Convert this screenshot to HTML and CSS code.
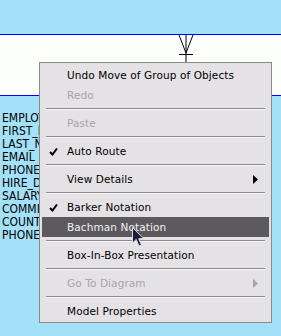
FILE: index.html
```html
<!DOCTYPE html>
<html>
<head>
<meta charset="utf-8">
<link rel="stylesheet" href="styles.css">
</head>
<body>
<div class="canvas">
  <div class="entity-top"></div>
  <div class="gap"></div>
  <div class="entity-bottom">
    <div class="cols">
      <div class="col">EMPLOYEE_ID</div>
      <div class="col">FIRST_NAME</div>
      <div class="col">LAST_NAME</div>
      <div class="col">EMAIL</div>
      <div class="col">PHONE_NUMBER</div>
      <div class="col">HIRE_DATE</div>
      <div class="col">SALARY</div>
      <div class="col">COMMISSION_PCT</div>
      <div class="col">COUNTRY_ID</div>
      <div class="col">PHONE_TYPE</div>
    </div>
  </div>

  <svg class="relation" width="20" height="30" viewBox="0 0 20 30">
    <path d="M1 0 L8 18 M15 0 L8 18 M8 0 L8 30 M1 19.5 L15 19.5" stroke="#000" stroke-width="1" fill="none"/>
  </svg>

  <div class="menu">
    <div class="item">Undo Move of Group of Objects</div>
    <div class="item disabled">Redo</div>
    <div class="sep"></div>
    <div class="item disabled">Paste</div>
    <div class="sep"></div>
    <div class="item checked">
      <svg class="check" width="9" height="8" viewBox="0 0 9 8"><path d="M1 4 L3.5 6.5 L8 0.5" stroke="#000" stroke-width="2" fill="none"/></svg>
      Auto Route</div>
    <div class="sep"></div>
    <div class="item sub">View Details
      <svg class="arrow" width="5" height="9" viewBox="0 0 5 9"><path d="M0 0 L5 4.5 L0 9 Z" fill="#000"/></svg>
    </div>
    <div class="sep"></div>
    <div class="item checked">
      <svg class="check" width="9" height="8" viewBox="0 0 9 8"><path d="M1 4 L3.5 6.5 L8 0.5" stroke="#000" stroke-width="2" fill="none"/></svg>
      Barker Notation</div>
    <div class="item active">Bachman Notation</div>
    <div class="sep"></div>
    <div class="item">Box-In-Box Presentation</div>
    <div class="sep"></div>
    <div class="item disabled sub">Go To Diagram
      <svg class="arrow" width="5" height="9" viewBox="0 0 5 9"><path d="M0 0 L5 4.5 L0 9 Z" fill="#a6a5a8"/></svg>
    </div>
    <div class="sep"></div>
    <div class="item">Model Properties</div>
  </div>

  <svg class="cursor" width="13" height="20" viewBox="0 0 13 20">
    <path d="M0.5 0.5 L0.5 16 L4.2 12.4 L7 19 L9.4 18 L6.7 11.6 L11.5 11.6 Z" fill="#1c1c3a" stroke="#d8d8e0" stroke-width="1"/>
  </svg>
</div>
</body>
</html>
```

FILE: styles.css
```css
html, body {
  margin: 0;
  padding: 0;
  background: #a3e1f9;
}
.canvas {
  position: relative;
  width: 281px;
  height: 336px;
  overflow: hidden;
  background: #a3e1f9;
}
.entity-top {
  height: 34px;
  border-bottom: 1px solid #0000ff;
  background: #a3e1f9;
}
.gap {
  height: 60px;
  background: #fdfffd;
}
.entity-bottom {
  border-top: 1px solid #0000ff;
  background: #a3e1f9;
  padding: 16px 0 0 2px;
  height: 224px;
}
.cols {
  width: 37px;
  overflow: hidden;
}
.col {
  font-family: "DejaVu Sans Condensed", "DejaVu Sans", sans-serif;
  font-size: 12px;
  line-height: 13px;
  color: #000;
  white-space: nowrap;
}
.relation {
  position: absolute;
  left: 178px;
  top: 35px;
}
.menu {
  position: absolute;
  left: 39px;
  top: 62px;
  width: 231px;
  padding: 2px 0 1px 0;
  background: #e4e2e5;
  border: 1px solid #8a8a8c;
  font-family: "DejaVu Sans", sans-serif;
  font-size: 10.5px;
  letter-spacing: 0.1px;
  color: #000;
}
.item {
  position: relative;
  height: 20px;
  line-height: 20px;
  margin: 0 2px;
  padding-left: 25px;
  white-space: nowrap;
}
.item.disabled {
  color: #a6a5a8;
}
.item.active {
  background: #5c5a5d;
  color: #f2f2f2;
}
.check {
  position: absolute;
  left: 7px;
  top: 7px;
}
.arrow {
  position: absolute;
  right: 11px;
  top: 6px;
}
.sep {
  height: 8px;
  margin: 0 6px;
  box-sizing: border-box;
  padding-top: 3px;
}
.sep::before {
  content: "";
  display: block;
  height: 1px;
  background: #8c8b8e;
  border-bottom: 1px solid #f6f5f7;
}
.cursor {
  position: absolute;
  left: 132px;
  top: 227px;
}
```
